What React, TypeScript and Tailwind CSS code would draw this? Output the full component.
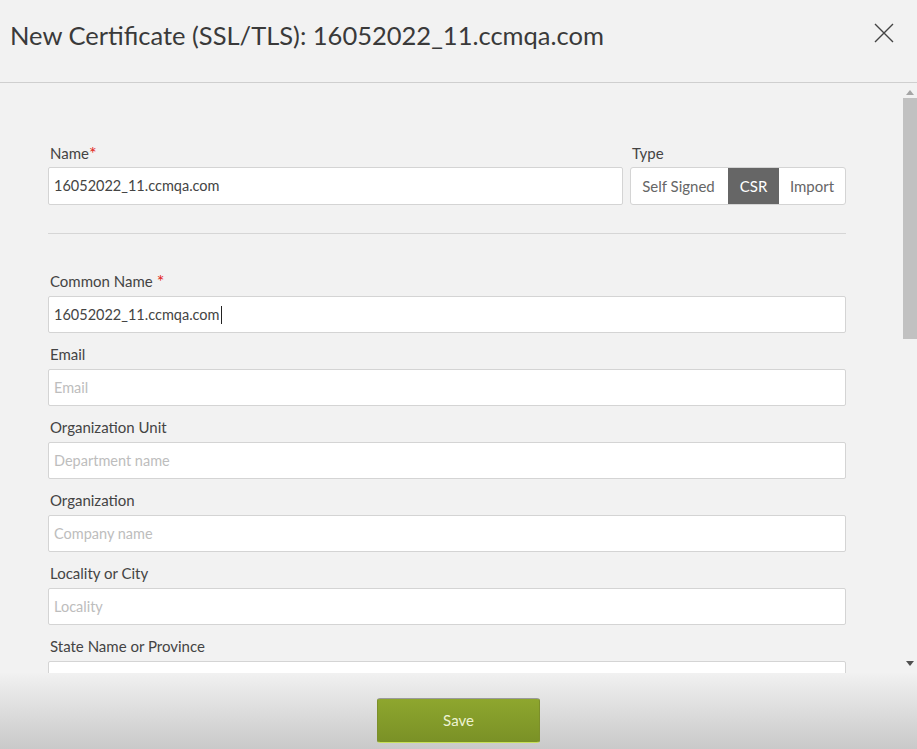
import React from "react";

const font = { fontFamily: "Lato, 'Open Sans', sans-serif" };

interface FieldProps {
  label: string;
  required?: boolean;
  value?: string;
  placeholder?: string;
  caret?: boolean;
}

const Field = ({ label, required, value, placeholder, caret }: FieldProps) => (
  <div className="flex flex-col">
    <label className="flex h-[20px] items-center pl-[2px] text-[15px] leading-[20px] text-[#444]">
      {label}
      {required && <span className="ml-[4px] text-[18px] leading-[20px] text-[#e2231a]">*</span>}
    </label>
    <div className="mt-[5px] flex h-[37px] items-center rounded-[2px] border border-[#d4d4d4] bg-white px-[5px] text-[14.5px] text-[#444]">
      {value ? (
        <span className="flex items-center">
          {value}
          {caret && <span className="ml-[1px] inline-block h-[18px] w-px bg-[#222]" />}
        </span>
      ) : (
        <span className="text-[#bdbdbd]">{placeholder}</span>
      )}
    </div>
  </div>
);

export default function App() {
  return (
    <div className="flex h-[749px] w-[917px] flex-col overflow-hidden bg-[#f2f2f2]" style={font}>
      <header className="flex h-[83px] shrink-0 items-start justify-between border-b border-[#cfcfcf] pl-[10px] pr-[22px] pt-[19px]">
        <h1 className="text-[25.5px] leading-[32px] text-[#3a3a3a]">
          New Certificate (SSL/TLS): 16052022_11.ccmqa.com
        </h1>
        <svg width="22" height="22" viewBox="0 0 22 22" className="mt-[3px]">
          <path d="M2 2 L20 20 M20 2 L2 20" stroke="#444" strokeWidth="1.4" fill="none" />
        </svg>
      </header>

      <div className="flex min-h-0 flex-1">
        <div className="flex-1 overflow-hidden pl-[48px] pr-[57px] pt-[60px]">
          <div className="flex gap-[7px]">
            <div className="flex flex-1 flex-col">
              <label className="flex h-[20px] items-center pl-[2px] text-[15px] leading-[20px] text-[#444]">
                Name<span className="text-[18px] leading-[20px] text-[#e2231a]">*</span>
              </label>
              <div className="mt-[4px] flex h-[38px] items-center rounded-[2px] border border-[#d4d4d4] bg-white px-[5px] text-[14.5px] text-[#444]">
                16052022_11.ccmqa.com
              </div>
            </div>
            <div className="flex w-[216px] flex-col">
              <label className="h-[20px] pl-[2px] text-[15px] leading-[20px] text-[#444]">Type</label>
              <div className="mt-[4px] flex h-[38px] overflow-hidden rounded-[3px] border border-[#d4d4d4] bg-white text-[15px]">
                <button className="w-[97px] pr-[2px] text-[#666]">Self Signed</button>
                <button className="w-[51px] bg-[#666] text-white">CSR</button>
                <button className="flex-1 text-[#666]">Import</button>
              </div>
            </div>
          </div>

          <div className="mt-[28px] h-px bg-[#d6d6d6]" />

          <div className="mt-[37px] flex flex-col gap-[11px]">
            <Field label="Common Name" required value="16052022_11.ccmqa.com" caret />
            <Field label="Email" placeholder="Email" />
            <Field label="Organization Unit" placeholder="Department name" />
            <Field label="Organization" placeholder="Company name" />
            <Field label="Locality or City" placeholder="Locality" />
            <Field label="State Name or Province" placeholder="" />
          </div>
        </div>

        <div className="flex w-[14px] shrink-0 flex-col items-center pt-[6px]">
          <svg width="8" height="6" viewBox="0 0 8 6">
            <path d="M0 6 L4 1 L8 6 Z" fill="#a5a5a5" />
          </svg>
          <div className="mt-[3px] h-[241px] w-[14px] bg-[#c1c1c1]" />
          <div className="flex-1" />
          <svg width="8" height="6" viewBox="0 0 8 6" className="mb-[6px]">
            <path d="M0 0 L8 0 L4 5 Z" fill="#505050" />
          </svg>
        </div>
      </div>

      <footer className="flex h-[76px] shrink-0 items-start justify-center bg-gradient-to-b from-[#f1f1f1] to-[#c9c9c9] pt-[25px]">
        <button className="h-[45px] w-[163px] rounded-[3px] border border-[#7c8f2a] border-t-[#9a9a9a] border-b-[#c8e05a] bg-gradient-to-b from-[#8ea62e] to-[#7a9126] text-[15px] text-[#eef3d2]">
          Save
        </button>
      </footer>
    </div>
  );
}
